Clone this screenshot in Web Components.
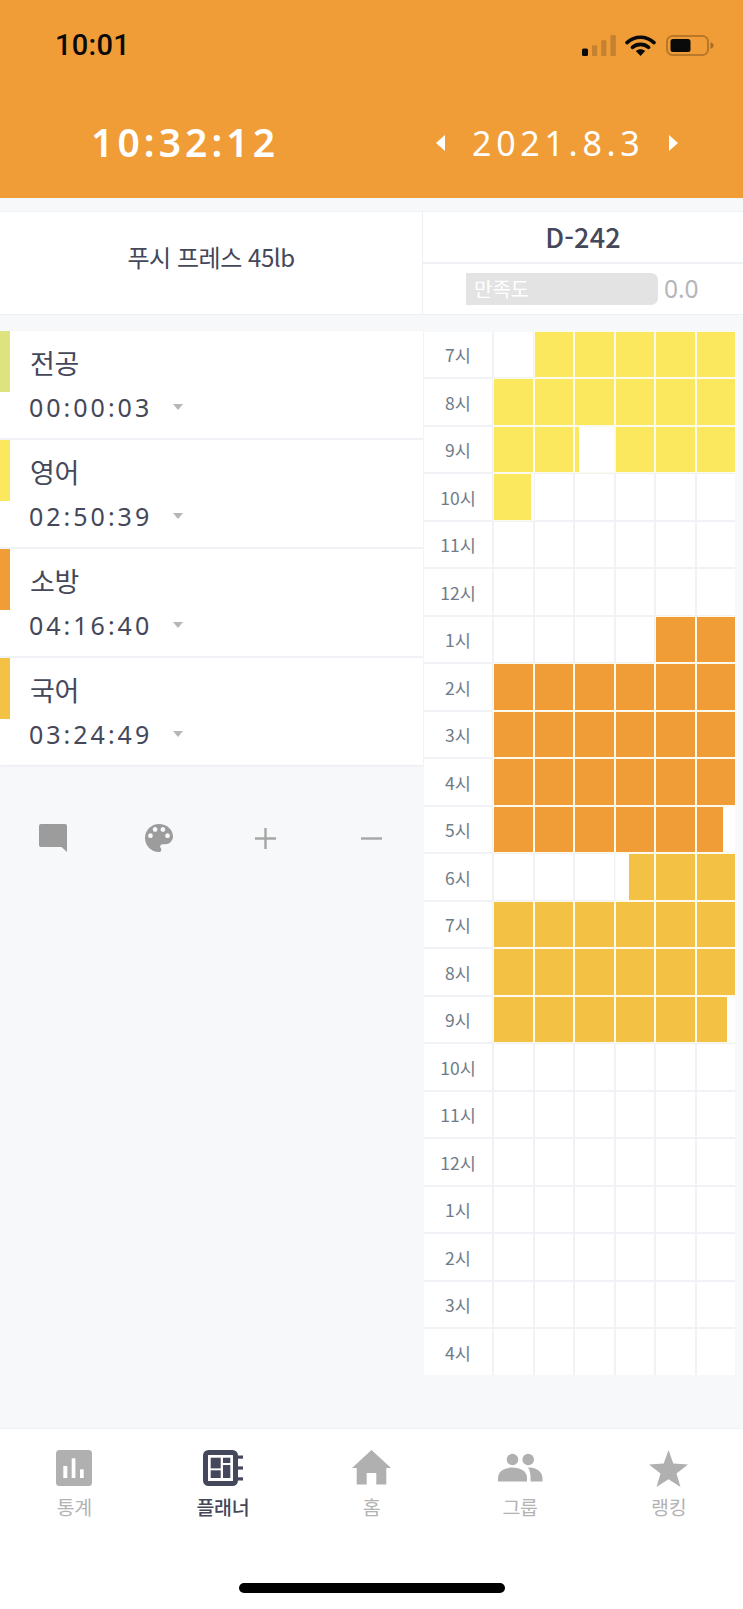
<!DOCTYPE html>
<html lang="ko">
<head>
<meta charset="utf-8">
<title>플래너</title>
<style>
html,body{margin:0;padding:0;background:#f7f8fa}
body{font-family:"Noto Sans CJK KR","Noto Sans",sans-serif;color:#45475a}
</style>
</head>
<body>
<planner-app>
  <app-header>
    <span slot="status">10:01</span>
    <span slot="clock">10:32:12</span>
    <span slot="date">2021.8.3</span>
  </app-header>
  <goal-card>
    <span slot="goal">푸시 프레스 45lb</span>
    <span slot="dday">D-242</span>
    <span slot="label">만족도</span>
    <span slot="score">0.0</span>
  </goal-card>
  <main-area>
    <subject-list slot="left">
      <subject-row color="#dde47f"><span slot="name">전공</span><span slot="time">00:00:03</span></subject-row>
      <subject-row color="#fbe85f"><span slot="name">영어</span><span slot="time">02:50:39</span></subject-row>
      <subject-row color="#f09d38"><span slot="name">소방</span><span slot="time">04:16:40</span></subject-row>
      <subject-row color="#f3c143"><span slot="name">국어</span><span slot="time">03:24:49</span></subject-row>
    </subject-list>
    <action-bar slot="left"></action-bar>
    <planner-grid slot="right"></planner-grid>
  </main-area>
  <tab-bar>
    <tab-item icon="stats">통계</tab-item>
    <tab-item icon="planner" active>플래너</tab-item>
    <tab-item icon="home">홈</tab-item>
    <tab-item icon="group">그룹</tab-item>
    <tab-item icon="star">랭킹</tab-item>
  </tab-bar>
</planner-app>
<script>
function def(name, html, init){
  const t=document.createElement('template'); t.innerHTML=html;
  customElements.define(name,class extends HTMLElement{
    constructor(){super();this.attachShadow({mode:'open'}).appendChild(t.content.cloneNode(true));}
    connectedCallback(){ if(init) init(this,this.shadowRoot); }
  });
}
def('planner-app',`<style>:host{display:flex;flex-direction:column;width:743px;height:1609px;overflow:hidden;background:#f7f8fa}</style><slot></slot>`);

def('app-header',`<style>
:host{display:flex;flex-direction:column;height:198px;background:#f09d38;flex:none;box-sizing:border-box}
.status{display:flex;align-items:center;justify-content:space-between;height:21px;margin-top:35px;padding:0 29px 0 55px}
.stime{font:500 29px/21px Roboto,sans-serif;color:#0a0a0a;letter-spacing:.3px}
.icons{display:flex;align-items:center}
.w{margin:0 10px 0 9px}
.row{display:flex;align-items:center;margin-top:62px;height:48px;padding-left:91px}
.clock{font:600 39px/48px "Noto Sans",sans-serif;color:#fff;letter-spacing:4.1px;width:345px}
.arrow{width:0;height:0;border-top:8px solid transparent;border-bottom:8px solid transparent;position:relative;top:1px}
.l{border-right:9px solid #fff}.r{border-left:9px solid #fff}
.date{font:400 34px/48px "Noto Sans",sans-serif;color:#fff;letter-spacing:4.7px;width:197px;margin-left:27px;position:relative;top:1px}
</style>
<div class="status"><span class="stime"><slot name="status"></slot></span>
<span class="icons">
<svg width="34" height="21" viewBox="0 0 34 21"><rect x="0" y="13.5" width="6" height="7.5" rx="1.5" fill="#0a0a0a"/><rect x="10" y="10.3" width="5.2" height="10.7" rx="1" fill="#c4812f"/><rect x="19.2" y="5.3" width="5.2" height="15.7" rx="1" fill="#c4812f"/><rect x="28.4" y="0" width="5.4" height="21" rx="1" fill="#c4812f"/></svg>
<svg class="w" width="31" height="21" viewBox="0 0 31 21"><path d="M2 7.6C10 .4 21 .4 29 7.6" fill="none" stroke="#0a0a0a" stroke-width="3.6" stroke-linecap="round"/><path d="M7.4 12.4C12 8.4 19 8.4 23.6 12.4" fill="none" stroke="#0a0a0a" stroke-width="3.6" stroke-linecap="round"/><path d="M10.8 16L15.5 21 20.2 16C17.5 13.7 13.5 13.7 10.8 16Z" fill="#0a0a0a"/></svg>
<svg width="48" height="21" viewBox="0 0 48 21"><rect x="1" y="1" width="41" height="19" rx="5.5" fill="none" stroke="#b9772a" stroke-width="2"/><rect x="4.5" y="4" width="20" height="13" rx="2.5" fill="#0a0a0a"/><path d="M44.5 7.2C46.8 8 47.6 9.2 47.6 10.5S46.8 13 44.5 13.8Z" fill="#a96c26"/></svg>
</span></div>
<div class="row"><span class="clock"><slot name="clock"></slot></span><span class="arrow l"></span><span class="date"><slot name="date"></slot></span><span class="arrow r"></span></div>`);

def('goal-card',`<style>
:host{display:flex;flex:none;height:104px;margin-top:13px;background:#fff;box-sizing:border-box;border-top:1px solid #f0f1f5;border-bottom:1px solid #eeeff3}
.goal{width:423px;box-sizing:border-box;border-right:1px solid #eeeff3;display:flex;align-items:center;justify-content:center;font:400 24px/30px "Noto Sans CJK KR",sans-serif;letter-spacing:-.45px;color:#45475a;padding-bottom:12px}
.side{flex:1;display:flex;flex-direction:column}
.d{height:50px;border-bottom:2px solid #f0f1f5;display:flex;align-items:center;justify-content:center;font:500 27px/30px "Noto Sans CJK KR",sans-serif;color:#45475a;letter-spacing:.2px;box-sizing:content-box}
.sat{flex:1;display:flex;align-items:center;padding-left:43px}
.bar{width:192px;height:32px;background:#e3e3e3;border-radius:0 7px 7px 0;box-sizing:border-box;padding-left:8px;display:flex;align-items:center;font:400 20px/24px "Noto Sans CJK KR",sans-serif;color:#fff}
.score{margin-left:6px;font:400 24.5px/30px "Noto Sans",sans-serif;color:#b4b6ba}
</style>
<div class="goal"><slot name="goal"></slot></div>
<div class="side"><div class="d"><slot name="dday"></slot></div>
<div class="sat"><div class="bar"><slot name="label"></slot></div><div class="score"><slot name="score"></slot></div></div></div>`);

def('main-area',`<style>
:host{display:flex;flex:1;min-height:0;margin-top:15px;padding-top:1px;box-sizing:border-box}
.l{width:423px;flex:none;display:flex;flex-direction:column}
.r{flex:1;padding-left:1px}
</style><div class="l"><slot name="left"></slot></div><div class="r"><slot name="right"></slot></div>`);

def('subject-list',`<style>:host{display:block;background:#fff;box-shadow:0 1px 2px rgba(60,70,90,.08)}</style><slot></slot>`);

def('subject-row',`<style>
:host{display:flex;height:109px;box-sizing:border-box;border-bottom:2px solid #f1f2f6}
:host(:last-child){border-bottom:0;height:107px}
.stripe{width:10px;height:61px;flex:none}
.body{padding-left:19px;display:flex;flex-direction:column}
.name{font:400 27px/34px "Noto Sans CJK KR",sans-serif;color:#45475a;margin:15px 0 0 1px;letter-spacing:-.3px}
.t{display:flex;align-items:center;margin-top:9.5px}
.time{font:400 25px/34px "Noto Sans",sans-serif;color:#45475a;letter-spacing:3px;width:144px}
.caret{width:0;height:0;border-left:5.5px solid transparent;border-right:5.5px solid transparent;border-top:6px solid #b5b6b8}
</style>
<div class="stripe"></div>
<div class="body"><div class="name"><slot name="name"></slot></div><div class="t"><span class="time"><slot name="time"></slot></span><span class="caret"></span></div></div>`,
(el,sr)=>{sr.querySelector('.stripe').style.background=el.getAttribute('color');});

def('action-bar',`<style>
:host{display:grid;grid-template-columns:repeat(4,106px);justify-items:center;align-items:center;margin-top:58px;height:30px}
svg{display:block}
</style>
<svg width="28" height="28" viewBox="0 0 28 28"><path d="M2 0H26a2 2 0 0 1 2 2V28L22.5 23H2a2 2 0 0 1-2-2V2a2 2 0 0 1 2-2Z" fill="#9c9c9c"/></svg>
<svg width="28" height="28" viewBox="3 3 18 18"><path fill="#9c9c9c" d="M12 3c-4.97 0-9 4.03-9 9s4.03 9 9 9c.83 0 1.5-.67 1.5-1.5 0-.39-.15-.74-.39-1.01-.23-.26-.38-.61-.38-.99 0-.83.67-1.5 1.5-1.5H16c2.76 0 5-2.24 5-5 0-4.42-4.03-8-9-8zm-5.5 9c-.83 0-1.5-.67-1.5-1.5S5.67 9 6.5 9 8 9.67 8 10.5 7.33 12 6.5 12zm3-4C8.67 8 8 7.33 8 6.5S8.67 5 9.5 5s1.5.67 1.5 1.5S10.33 8 9.5 8zm5 0c-.83 0-1.5-.67-1.5-1.5S13.67 5 14.5 5s1.5.67 1.5 1.5S15.33 8 14.5 8zm3 4c-.83 0-1.5-.67-1.5-1.5S16.67 9 17.5 9s1.5.67 1.5 1.5-.67 1.5-1.5 1.5z"/></svg>
<svg width="21" height="21" viewBox="0 0 21 21"><path d="M0 10.5H21M10.5 0V21" stroke="#a6a6a6" stroke-width="2.4"/></svg>
<svg width="21" height="21" viewBox="0 0 21 21"><path d="M0 10.5H21" stroke="#a6a6a6" stroke-width="2.4"/></svg>`);

const HOURS=['7','8','9','10','11','12','1','2','3','4','5','6','7','8','9','10','11','12','1','2','3','4'];
const C={y:'#fbe85f',o:'#f09d38',k:'#f3c143'};
const F=(c)=>Array(6).fill(c);
const PLAN=[
 [null,'y','y','y','y','y'],F('y'),['y','y',['y',0,11],'y','y','y'],[['y',0,95],null,null,null,null,null],
 F(null),F(null),[null,null,null,null,'o','o'],F('o'),F('o'),F('o'),['o','o','o','o','o',['o',0,68]],
 [null,null,null,['k',34,100],'k','k'],F('k'),F('k'),['k','k','k','k','k',['k',0,78]],
 F(null),F(null),F(null),F(null),F(null),F(null),F(null)];

def('hour-cell',`<style>
:host{display:block;background:#fff;height:100%}
:host([filled]){box-shadow:0 0 0 1px rgba(255,250,235,.8);position:relative}
</style>`);

def('hour-row',`<style>
:host{display:grid;grid-template-columns:68px repeat(6,38.5px);column-gap:2px;height:45.5px;margin-right:8px}
.h{background:#fff;display:flex;align-items:center;justify-content:center;font:400 17.5px/20px "Noto Sans CJK KR",sans-serif;color:#6f7b88;padding-top:2px}
</style><div class="h"><slot></slot></div><slot name="cells"></slot>`);

def('planner-grid',`<style>
:host{display:flex;flex-direction:column;row-gap:2px;background:#f1f2f6;width:311px;margin-top:.5px}
</style><slot></slot>`,(el)=>{
  if(el.childElementCount) return;
  HOURS.forEach((h,i)=>{
    const r=document.createElement('hour-row'); r.textContent=h+'시';
    PLAN[i].forEach(v=>{
      const c=document.createElement('hour-cell'); c.slot='cells';
      if(v){
        c.setAttribute('filled','');
        if(Array.isArray(v)) c.style.background=`linear-gradient(to right,#fff ${v[1]}%,${C[v[0]]} ${v[1]}%,${C[v[0]]} ${v[2]}%,#fff ${v[2]}%)`;
        else c.style.background=C[v];
      }
      r.appendChild(c);
    });
    el.appendChild(r);
  });
});

def('tab-bar',`<style>
:host{display:flex;flex-direction:column;flex:none;height:181px;background:#fff;box-sizing:border-box;border-top:1px solid #eff0f4;padding-top:21px}
.items{display:grid;grid-template-columns:repeat(5,1fr)}
.home{width:266px;height:10px;border-radius:5px;background:#000;align-self:center;margin-top:auto;margin-bottom:16px}
</style><div class="items"><slot></slot></div><div class="home"></div>`);

const ICONS={
 stats:`<svg width="36" height="36" viewBox="0 0 36 36"><rect width="36" height="36" rx="3.5" fill="#b0b0b0"/><g fill="#fff"><rect x="7.3" y="16" width="4" height="12"/><rect x="15.7" y="8.3" width="3.7" height="19.7"/><rect x="24" y="19.3" width="3.7" height="8.7"/></g></svg>`,
 planner:`<svg width="40" height="36" viewBox="0 0 40 36"><rect x="2.5" y="2.5" width="30" height="31" rx="3" fill="#fff" stroke="#45475a" stroke-width="5"/><g fill="#45475a"><rect x="7.7" y="7.7" width="10" height="10.7"/><rect x="20" y="7.7" width="7.3" height="5.3"/><rect x="20" y="15" width="7.3" height="13"/><rect x="7.7" y="20.3" width="10" height="7.7"/><rect x="34" y="5.5" width="6" height="3.2"/><rect x="34" y="16.4" width="6" height="3.2"/><rect x="34" y="27.3" width="6" height="3.2"/></g></svg>`,
 home:`<svg width="39" height="36" viewBox="0 0 39 36"><path d="M19.5 0 39 18H34.3V34.5H24.3V23H14.7V34.5H4.7V18H0Z" fill="#b0b0b0"/></svg>`,
 group:`<svg width="45" height="36" viewBox="0 0 45 36"><g fill="#b0b0b0" transform="translate(0,3)"><circle cx="14.5" cy="6.5" r="5.8"/><circle cx="30.2" cy="6.5" r="5.8"/><path d="M0 28.5V25C0 18 7 14.5 14.5 14.5S29 18 29 25V28.5Z"/><path d="M30 14.6C38 14.2 44.5 18.5 44.5 25V28.5H32.5V25C32.5 21 32 17.5 30 14.6Z"/></g></svg>`,
 star:`<svg width="39" height="37" viewBox="0 0 39 37"><path d="M19.5 0 24.3 13.6 39 14.5 27.5 23.6 31.5 37 19.5 29.2 7.5 37 11.5 23.6 0 14.5 14.7 13.6Z" fill="#b0b0b0"/></svg>`
};
def('tab-item',`<style>
:host{display:flex;flex-direction:column;align-items:center;color:#b3b3b3;font:400 19.5px/24px "Noto Sans CJK KR",sans-serif;letter-spacing:-.3px}
:host([active]){color:#45475a;font-weight:500}
.i{height:37px;display:flex;align-items:flex-start}
.t{margin-top:8px}
svg{display:block}
</style><div class="i"></div><div class="t"><slot></slot></div>`,
(el,sr)=>{sr.querySelector('.i').innerHTML=ICONS[el.getAttribute('icon')];});
</script>
</body>
</html>
